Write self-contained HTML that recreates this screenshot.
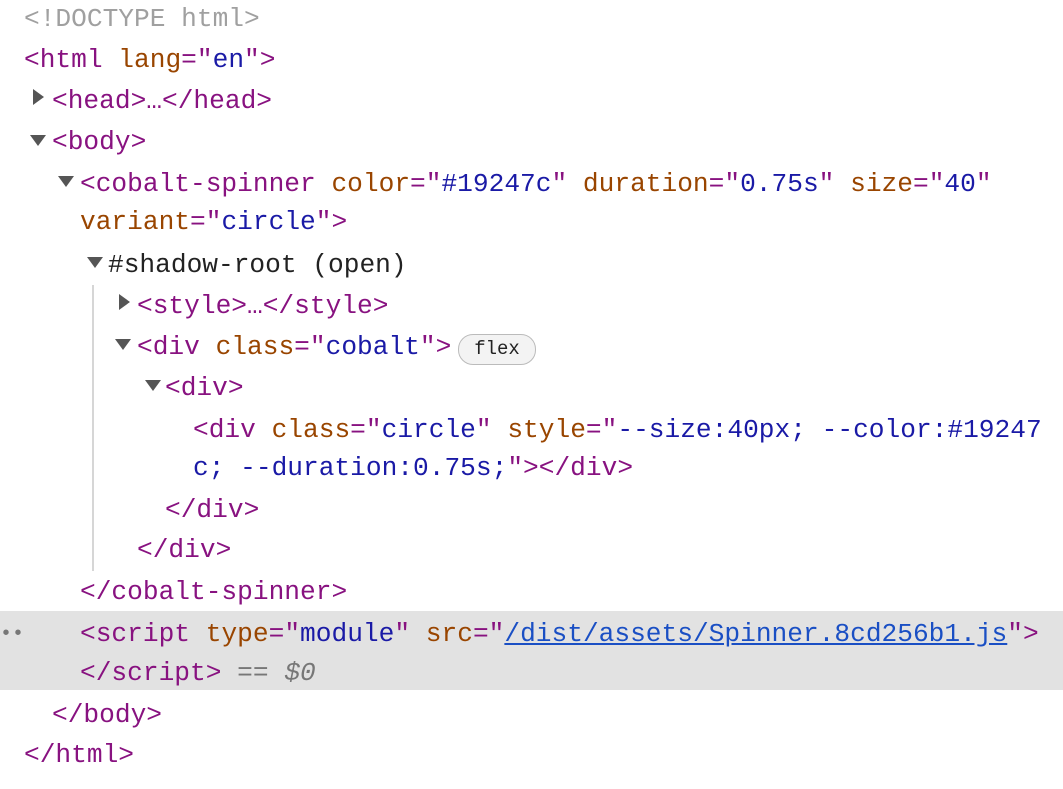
<!DOCTYPE html>
<html><head><style>
body{margin:0;width:1063px;height:789px;background:#fff;overflow:hidden;position:relative;font-family:"Liberation Mono","DejaVu Sans Mono",monospace;font-size:26.2px;}
.l{position:absolute;height:41px;line-height:41px;white-space:pre;color:#222;}
.t{color:#881280}.a{color:#994500}.v{color:#1a1aa6}.g{color:#a0a0a0}
.tri{position:absolute;width:0;height:0;}
.dn{border-left:8px solid transparent;border-right:8px solid transparent;border-top:11px solid #555;}
.rt{border-top:8px solid transparent;border-bottom:8px solid transparent;border-left:11px solid #555;}
u{color:#1a4fc4;text-decoration:underline;}
</style></head><body>
<div style="position:absolute;left:0;top:611px;width:1063px;height:79px;background:#e2e2e2"></div>
<div style="position:absolute;left:92px;top:285px;width:2px;height:286px;background:#d6d6d6"></div>

<div class="l g" style="left:24px;top:-1px">&lt;!DOCTYPE html&gt;</div>
<div class="l" style="left:24px;top:40px"><span class="t">&lt;html</span> <span class="a">lang</span><span class="t">="</span><span class="v">en</span><span class="t">"&gt;</span></div>
<div class="tri rt" style="left:33px;top:89px"></div>
<div class="l t" style="left:52px;top:81px">&lt;head&gt;…&lt;/head&gt;</div>
<div class="tri dn" style="left:30px;top:135px"></div>
<div class="l t" style="left:52px;top:122px">&lt;body&gt;</div>
<div class="tri dn" style="left:58px;top:176px"></div>
<div class="l" style="left:80px;top:164px"><span class="t">&lt;cobalt-spinner</span> <span class="a">color</span><span class="t">="</span><span class="v">#19247c</span><span class="t">"</span> <span class="a">duration</span><span class="t">="</span><span class="v">0.75s</span><span class="t">"</span> <span class="a">size</span><span class="t">="</span><span class="v">40</span><span class="t">"</span></div>
<div class="l" style="left:80px;top:202px"><span class="a">variant</span><span class="t">="</span><span class="v">circle</span><span class="t">"&gt;</span></div>
<div class="tri dn" style="left:87px;top:257px"></div>
<div class="l" style="left:108px;top:245px;color:#222">#shadow-root (open)</div>
<div class="tri rt" style="left:119px;top:294px"></div>
<div class="l t" style="left:137px;top:286px">&lt;style&gt;…&lt;/style&gt;</div>
<div class="tri dn" style="left:115px;top:339px"></div>
<div class="l" style="left:137px;top:327px"><span class="t">&lt;div</span> <span class="a">class</span><span class="t">="</span><span class="v">cobalt</span><span class="t">"&gt;</span></div>
<div style="position:absolute;left:458px;top:334px;width:76px;height:29px;border:1px solid #bbb;border-radius:15px;background:#f3f3f3;font-size:19px;line-height:29px;text-align:center;color:#222">flex</div>
<div class="tri dn" style="left:145px;top:380px"></div>
<div class="l t" style="left:165px;top:368px">&lt;div&gt;</div>
<div class="l" style="left:193px;top:410px"><span class="t">&lt;div</span> <span class="a">class</span><span class="t">="</span><span class="v">circle</span><span class="t">"</span> <span class="a">style</span><span class="t">="</span><span class="v">--size:40px; --color:#19247</span></div>
<div class="l" style="left:193px;top:448px"><span class="v">c; --duration:0.75s;</span><span class="t">"&gt;&lt;/div&gt;</span></div>
<div class="l t" style="left:165px;top:490px">&lt;/div&gt;</div>
<div class="l t" style="left:137px;top:530px">&lt;/div&gt;</div>
<div class="l t" style="left:80px;top:572px">&lt;/cobalt-spinner&gt;</div>
<div class="l" style="left:0px;top:614px;color:#777;font-size:20px">••</div>
<div class="l" style="left:80px;top:614px"><span class="t">&lt;script</span> <span class="a">type</span><span class="t">="</span><span class="v">module</span><span class="t">"</span> <span class="a">src</span><span class="t">="</span><u>/dist/assets/Spinner.8cd256b1.js</u><span class="t">"&gt;</span></div>
<div class="l" style="left:80px;top:653px"><span class="t">&lt;/script&gt;</span> <span style="color:#777">== <i>$0</i></span></div>
<div class="l t" style="left:52px;top:695px">&lt;/body&gt;</div>
<div class="l t" style="left:24px;top:735px">&lt;/html&gt;</div>
</body></html>
